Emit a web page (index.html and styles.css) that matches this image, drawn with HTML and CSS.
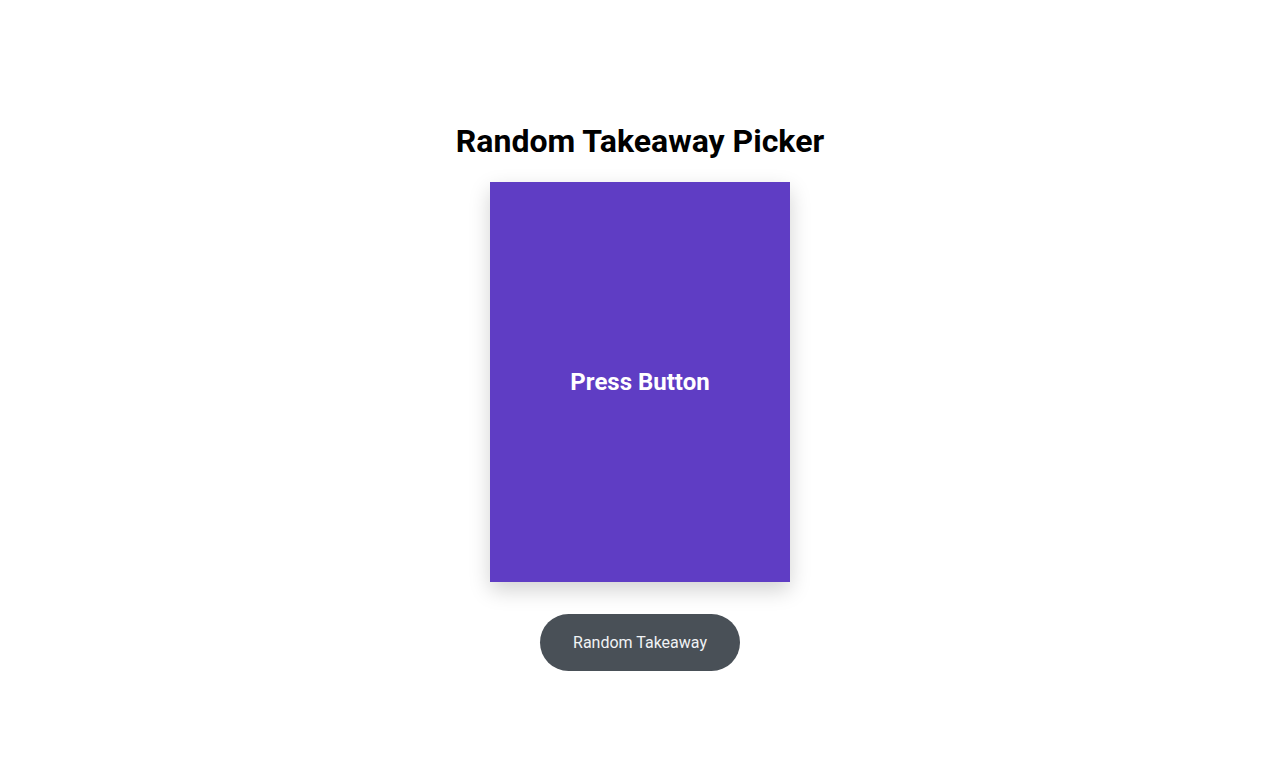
FILE: index.html
```html
<!DOCTYPE html>
<html lang="en">
<head>
<meta charset="utf-8">
<title>Random Takeaway Picker</title>
<link rel="stylesheet" href="styles.css">
</head>
<body>
<main class="app">
  <h1 class="title">Random Takeaway Picker</h1>
  <div class="card">
    <span class="card-text">Press Button</span>
  </div>
  <button class="pick-btn" type="button">Random Takeaway</button>
</main>
</body>
</html>
```

FILE: styles.css
```css
html, body {
  margin: 0;
  padding: 0;
  background: #ffffff;
}

body {
  font-family: Roboto, "Liberation Sans", Arial, sans-serif;
  color: #000000;
}

.app {
  display: flex;
  flex-direction: column;
  align-items: center;
  padding-top: 123px;
}

.title {
  margin: 0;
  font-size: 32px;
  line-height: 37.5px;
  font-weight: 700;
}

.card {
  margin-top: 21.5px;
  width: 300px;
  height: 400px;
  background: #5f3dc4;
  box-shadow: 0 8px 20px rgba(0, 0, 0, 0.18);
  display: flex;
  align-items: center;
  justify-content: center;
}

.card-text {
  color: #ffffff;
  font-size: 24px;
  font-weight: 700;
}

.pick-btn {
  margin-top: 32px;
  width: 200px;
  height: 57px;
  border: none;
  border-radius: 29px;
  background: #495057;
  color: #f1f3f5;
  font-family: Roboto, "Liberation Sans", Arial, sans-serif;
  font-size: 16px;
  cursor: pointer;
}
```
